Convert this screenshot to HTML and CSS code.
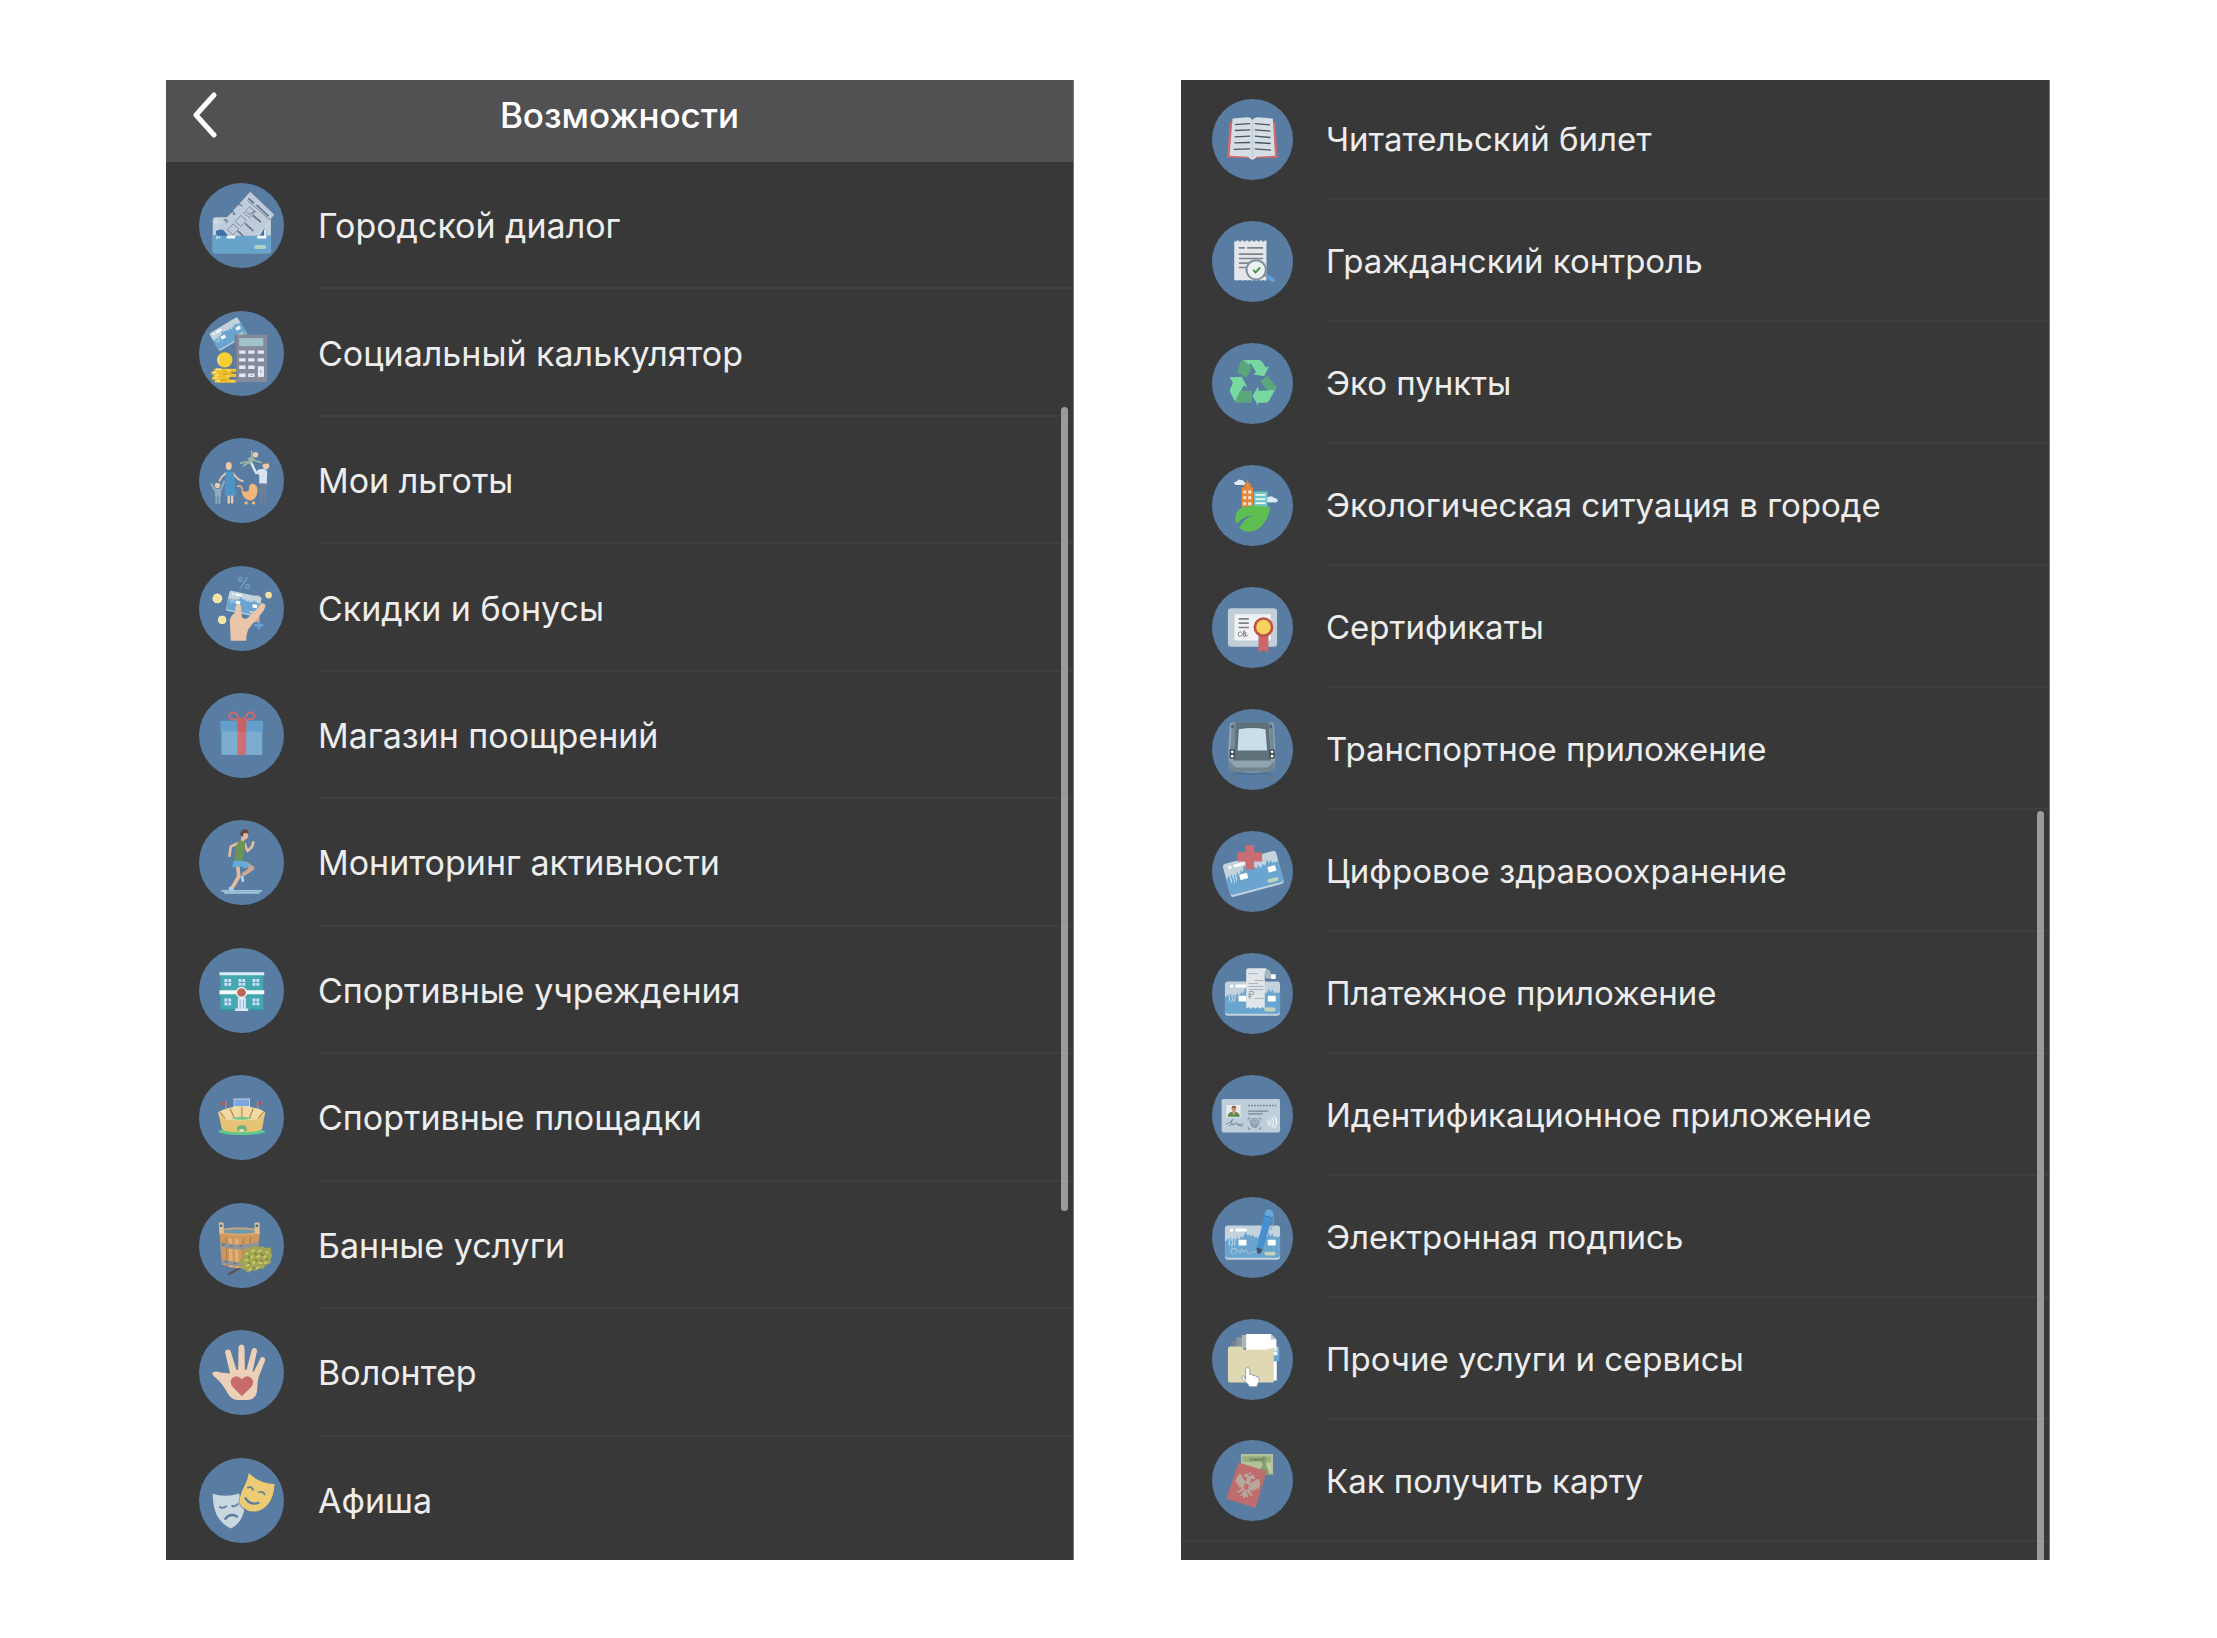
FILE: index.html
```html
<!DOCTYPE html>
<html lang="ru">
<head>
    <meta charset="UTF-8">
    <meta name="viewport" content="width=device-width, initial-scale=1">
    <title>Возможности</title>
    <link rel="stylesheet" href="styles.css">
</head>
<body>
    <svg class="sprite" aria-hidden="true">
        <!-- city card, 166x103 -->
        <symbol id="card" viewBox="0 0 166 103" overflow="visible">
            <rect width="166" height="103" rx="9" fill="#c4d2dc"/>
            <path d="M0 48l5-4 4-6 4 8 5-10 4 8 6-6 4 8 5-14 3 11 6-5 4-8 4 9 5-14 4-8 4 14 6-5 4 7 8-6 3 10 6-5 5 7 4-12 4 9 6 4 4-12 4 8 7-4 5-12 4 14 6-10 5 12 4-4 6 3 8-4v57q0 9-9 9H9q-9 0-9-9z" fill="#69a5cf"/>
            <circle cx="20" cy="14" r="5" fill="#fff"/>
            <rect x="32" y="9" width="34" height="9" rx="3" fill="#fff"/>
            <rect x="41" y="43" width="24" height="17" rx="2" fill="#fff"/>
            <rect x="129" y="43" width="24" height="17" rx="2" fill="#fff"/>
            <path d="M12 44q5 8 0 16M20 41q6 11 0 22M28 44q5 8 0 16" fill="none" stroke="#c9e0ef" stroke-width="3"/>
            <rect x="119" y="79" width="33" height="11" rx="5" fill="#c3d4bd"/>
        </symbol>
    </svg>
    <main class="page">
        <section class="screen screen-main">
            <header class="bar">
                <button class="back" type="button" aria-label="Назад">
                    <svg viewBox="0 0 24 48"><path d="M21 4L3 24l18 20"/></svg>
                </button>
                <h1>Возможности</h1>
            </header>
            <ul class="list">
                <li><a href="#">
                    <svg class="icon" viewBox="27 40 254 254">
                        <rect x="68" y="142" width="174" height="108" rx="10" fill="#c3d3dc"/>
                        <path d="M78 183l12-4 18 2 10 17h90l14-22 6 4v20H78z" fill="#3f72a8"/>
                        <path d="M180 66l72 69-58 64H116L88 168z" fill="#bfcada"/>
                        <g fill="none" stroke="#68758a" stroke-width="2">
                            <path d="M178 111l17 15-17 18-17-15zM152 137l17 15-17 18-17-15zM129 162l17 15-17 18-17-15z"/>
                            <path d="M171 127l7 7 17-11" stroke="#39485f"/>
                        </g>
                        <g stroke="#5c687d" stroke-width="5">
                            <path d="M175 86l17 15M199 106l36 33M188 137l24 20M165 161l24 22M143 184l18 16" stroke-dasharray="6 1"/>
                            <path d="M172 92l68 59" stroke-width="2"/>
                        </g>
                        <g class="mark" fill="#56627a">
                            <text transform="translate(153 114) rotate(-48)">1</text>
                            <text transform="translate(130 138) rotate(-48)">2</text>
                            <text transform="translate(108 161) rotate(-48)">3</text>
                        </g>
                        <path d="M68 196l14-2 4 4h150l6-4v46q0 10-10 10H78q-10 0-10-10z" fill="#67a3cb"/>
                        <path d="M110 198h25v8h-25zM201 198h27v8h-27zM222 178h5v28h-5z" fill="#fff"/>
                        <path d="M81 199v8M88 199v6M78 152v8" stroke="#e6f1f7" stroke-width="4"/>
                        <rect x="192" y="225" width="36" height="12" rx="6" fill="#b3cfc3"/>
                    </svg>
                    <span>Городской диалог</span>
                </a></li>
                <li><a href="#">
                    <svg class="icon" viewBox="27 423 254 254">
                        <g transform="translate(57 491) rotate(-31) scale(.59)"><use href="#card" width="166" height="103"/></g>
                        <rect x="134" y="493" width="97" height="142" rx="4" fill="#858b9c"/>
                        <path d="M134 493h6v142h-6z" fill="#747b8e"/>
                        <rect x="147" y="504" width="72" height="24" fill="#a0c4c8"/>
                        <path d="M147 546h19M174 546h19M202 546h19M147 569h19M174 569h19M202 569h19M147 591h19M174 591h19M147 615h19M174 615h19" stroke="#e3e9f5" stroke-width="10"/>
                        <rect x="203" y="588" width="18" height="32" fill="#e3e9f5"/>
                        <path d="M212 600v8M181 615h6" stroke="#858b9c" stroke-width="3"/>
                        <circle cx="104" cy="569" r="23" fill="#f6ce35"/>
                        <path d="M88 585a23 23 0 0 1 0-32q-2 18 0 32z" fill="#fbe07d"/>
                        <path d="M72 600h66M64 608h60M70 616h68M66 624h52M74 633h64" stroke="#efc22c" stroke-width="9"/>
                        <path d="M78 597h16M68 606h12M76 614h10M72 622h10M80 631h10M112 600h8M108 617h10M122 631h8" stroke="#fdeaa0" stroke-width="4"/>
                        <path d="M100 604h8M98 612h20M90 629h20M124 608h8" stroke="#c99a16" stroke-width="3"/>
                    </svg>
                    <span>Социальный калькулятор</span>
                </a></li>
                <li><a href="#">
                    <svg class="icon" viewBox="27 805 254 254">
                        <g fill="none" stroke-linecap="round" stroke-linejoin="round">
                            <path d="M110 909q-14 8-22 24M130 911q10 18 28 23" stroke="#ecc9ad" stroke-width="5"/>
                            <path d="M116 978v20M126 978v20" stroke="#ecc9ad" stroke-width="7"/>
                            <path d="M64 943l10 17M102 935l-10 24" stroke="#8fadb8" stroke-width="6"/>
                            <path d="M79 975v24M88 975v24" stroke="#8fadb8" stroke-width="6"/>
                            <path d="M186 886l12 24M182 878l6 10" stroke="#d8e3f3" stroke-width="7"/>
                            <path d="M226 908l-2 32" stroke="#d8e3f3" stroke-width="10"/>
                            <path d="M178 866l26 10M184 845l2 18M151 880l22-4M160 888l20-12M208 876l5 2" stroke="#9cb6a2" stroke-width="5"/>
                            <path d="M143 949h8l6 8" stroke="#e9b176" stroke-width="5"/>
                        </g>
                        <ellipse cx="116" cy="889" rx="9" ry="12" fill="#ecc9ad"/>
                        <path d="M106 883q10-12 20 0l-3-6h-14z" fill="#a97f68"/>
                        <path d="M108 905h22l8 72h-35z" fill="#4e94c4"/>
                        <circle cx="82" cy="947" r="8" fill="#ecc9ad"/>
                        <path d="M74 957h18l1 22H75z" fill="#8fadb8"/>
                        <circle cx="196" cy="855" r="8" fill="#ecc9ad"/>
                        <path d="M172 867l14-7 8 9-14 12z" fill="#9cb6a2"/>
                        <circle cx="227" cy="888" r="10" fill="#ecc9ad"/>
                        <path d="M216 884q8-14 20-2l-10-1z" fill="#7b6d6c"/>
                        <path d="M203 900q14-5 26 0v42h-22v-26l-9-8z" fill="#d8e3f3"/>
                        <path d="M208 941h20v58h-6l-3-48-3 48h-7z" fill="#6f7f96"/>
                        <path d="M153 958q16 14 24 2-4-12 8-19 16 2 17 20-2 29-24 31-21-4-25-34z" fill="#f0b67a"/>
                        <circle cx="168" cy="999" r="5" fill="#f0b67a"/>
                        <circle cx="190" cy="999" r="5" fill="#f0b67a"/>
                    </svg>
                    <span>Мои льготы</span>
                </a></li>
                <li><a href="#">
                    <svg class="icon" viewBox="27 47 254 254">
                        <text class="percent" x="161" y="115" text-anchor="middle" fill="#70a5cc">%</text>
                        <g fill="#f5e2a0"><circle cx="82" cy="144" r="14"/><circle cx="96" cy="208" r="12"/><circle cx="235" cy="134" r="10"/></g>
                        <g fill="none" stroke="#f9efc8" stroke-width="3"><circle cx="82" cy="144" r="13" stroke-dasharray="5 3"/><circle cx="96" cy="208" r="11" stroke-dasharray="5 3"/></g>
                        <path d="M206 211v26M193 224h26" stroke="#69a4d0" stroke-width="7"/>
                        <path d="M186 146q4-13 18-11 9 3 7 18l-4 60-30 4z" fill="#dcae90"/>
                        <g transform="translate(119 120) rotate(12) scale(.59)"><use href="#card" width="166" height="103"/></g>
                        <path d="M122 270l-3-62q1-9 16-22l1-16q3-12 12-9 7 4 5 15l2 23q6 10 19 2l15-16q14-8 22-25 8-5 15 3-3 18-16 30l-29 34q-13 14-13 43z" fill="#e9c6aa"/>
                    </svg>
                    <span>Скидки и бонусы</span>
                </a></li>
                <li><a href="#">
                    <svg class="icon" viewBox="27 430 254 254">
                        <g fill="none" stroke="#cc6a6f" stroke-width="6">
                            <path d="M147 511q-29-1-30-11 3-14 16-12 10 6 14 23zM163 511q29-1 30-11-3-14-16-12-10 6-14 23z"/>
                        </g>
                        <path d="M94 543h122v68q0 4-4 4H98q-4 0-4-4z" fill="#7badd0"/>
                        <rect x="91" y="513" width="127" height="32" rx="4" fill="#649fcb"/>
                        <rect x="142" y="513" width="26" height="102" fill="#ca6f73"/>
                        <path d="M142 513q13-20 26 0v32h-26z" fill="#c96064"/>
                    </svg>
                    <span>Магазин поощрений</span>
                </a></li>
                <li><a href="#">
                    <svg class="icon" viewBox="27 812 254 254">
                        <g fill="none" stroke-linecap="round" stroke-linejoin="round">
                            <path d="M142 882l-20 9-4 28M163 882l9 23 14-14 3-12" stroke="#e3bb9f" stroke-width="8"/>
                            <path d="M143 950l3 31-20 34" stroke="#e3bb9f" stroke-width="11"/>
                            <path d="M165 942l22 14-26 18" stroke="#cfa78e" stroke-width="12"/>
                            <path d="M156 982l2 12" stroke="#a8d4f5" stroke-width="8"/>
                            <path d="M120 1016l7 7" stroke="#a8d4f5" stroke-width="9"/>
                        </g>
                        <path d="M154 853q7-10 18-5l2 14q-5 10-12 9v10h-10z" fill="#e3bb9f"/>
                        <path d="M150 854q2-15 16-14 11 2 9 12l-14-1-3 11q-7 0-8-8z" fill="#65453f"/>
                        <path d="M147 868l8 7 10 1-1 20-8 40-24-1 4-24-2-18q9-7 13-25z" fill="#6d9457"/>
                        <path d="M132 933l31 2 17 14-14 9-12-6-28 1z" fill="#68a9dc"/>
                        <path d="M94 1024h121M102 1030h106" stroke="#a2c5dc" stroke-width="5"/>
                    </svg>
                    <span>Мониторинг активности</span>
                </a></li>
                <li><a href="#">
                    <svg class="icon" viewBox="27 54 254 254">
                        <rect x="91" y="132" width="128" height="106" fill="#43a9ae"/>
                        <path d="M88 131h134" stroke="#dcecfa" stroke-width="9"/>
                        <path d="M88 186h134" stroke="#f2f8fb" stroke-width="12"/>
                        <path d="M103 157h20M145 157h20M187 157h20M103 215h20M187 215h20" stroke="#cde2fb" stroke-width="20"/>
                        <path d="M103 157h20M145 157h20M187 157h20M103 215h20M187 215h20M113 147v20M155 147v20M197 147v20M113 205v20M197 205v20" stroke="#5f9bd0" stroke-width="3"/>
                        <path d="M88 240h134" stroke="#39929c" stroke-width="4"/>
                        <path d="M143 203h24v32h7v7h-39v-7h8z" fill="#dce9fb"/>
                        <path d="M150 208v27M160 208v27" stroke="#8fb3df" stroke-width="3"/>
                        <circle cx="154" cy="187" r="17" fill="#eef5f8"/>
                        <circle cx="154" cy="187" r="13" fill="#bd6756"/>
                    </svg>
                    <span>Спортивные учреждения</span>
                </a></li>
                <li><a href="#">
                    <svg class="icon" viewBox="27 436 254 254">
                        <path d="M107 512v24M203 512v24" stroke="#a5b3c4" stroke-width="3"/>
                        <path d="M106 514v16l-18-8zM203 514v16l16-8z" fill="#b55755"/>
                        <path d="M132 536v-28h46v28" fill="#7ea6dc" stroke="#bdd0e6" stroke-width="3"/>
                        <path d="M130 531h50" stroke="#e6eef5" stroke-width="3"/>
                        <ellipse cx="155" cy="605" rx="70" ry="10" fill="#5fc98c"/>
                        <path d="M84 547q30-17 71-17t70 17l-9 48q-3 12-61 12t-60-12z" fill="#e5c274"/>
                        <path d="M84 547q30-17 71-17t70 17l-14 19q-22 6-56 6t-57-6z" fill="#f1daa2"/>
                        <path d="M122 565q33-9 64 0-30 9-64 0z" fill="#74c98c"/>
                        <path d="M89 546l16 20M120 536l12 28M155 532v30M189 536l-11 28M220 546l-16 20" stroke="#bb8a66" stroke-width="4"/>
                        <path d="M141 604v-10q0-8 14-8t14 8v10z" fill="#69b27f"/>
                        <path d="M148 605v-7h13v7z" fill="#e4e5d5"/>
                    </svg>
                    <span>Спортивные площадки</span>
                </a></li>
                <li><a href="#">
                    <svg class="icon" viewBox="27 819 254 254">
                        <path d="M150 1012l-36 20M148 1014l-26 16" stroke="#5d5357" stroke-width="6"/>
                        <path d="M88 905l122 1-16 98q-46 20-99-1z" fill="#cf995e"/>
                        <path d="M107 920l4 88M160 925l-3 88M181 918l-6 85" stroke="#a9794a" stroke-width="3"/>
                        <path d="M121 925l2 86M140 925v88" stroke="#dfb176" stroke-width="10"/>
                        <ellipse cx="148" cy="904" rx="60" ry="12" fill="#d9a76c"/>
                        <ellipse cx="148" cy="904" rx="51" ry="7" fill="#6e9bac"/>
                        <path d="M86 879q7-5 15 0v31H88zM193 879q7-5 15 0v31h-14z" fill="#dfc094"/>
                        <circle cx="93" cy="887" r="4" fill="#41608a"/>
                        <circle cx="200" cy="887" r="4" fill="#41608a"/>
                        <path d="M90 935q56 16 116 0v14q-58 17-114 1zM94 986q30 10 60 9v13q-30 0-58-8z" fill="#8f9499"/>
                        <path d="M96 943h8M120 947h8M148 948h8M104 995h8M130 1000h8" stroke="#666d77" stroke-width="4"/>
                        <path d="M160 965l12-12 10 2 12-9 10 5 14-3 9 6 15-2v14l5 10-7 12 1 12-15 4-7 12-12-2-10 8-11-3-12 9-10-10-11-2 2-14-8-10 9-10z" fill="#a2a650"/>
                        <path d="M165 974l8-6M184 964l9-5M204 964l10-4M227 964l8 5M163 991l10-3M181 984l8-8M199 980l10-3M219 982l9-5M168 1007l10-5M187 1002l7-8M205 997l10 3M176 1020l8-5M198 1014l10-3M222 999l9-3" stroke="#d0cc7c" stroke-width="5"/>
                        <path d="M174 977l5 7M194 968l5 7M212 971l7 6M174 997l7 5M194 988l7 5M210 989l7 4M188 1012l7 3M228 985l5 5" stroke="#77823e" stroke-width="4"/>
                    </svg>
                    <span>Банные услуги</span>
                </a></li>
                <li><a href="#">
                    <svg class="icon" viewBox="27 61 254 254">
                        <path d="M120 191l-15-63q0-9 9-9 6 0 8 7l17 54h5l1-68q2-8 9-8t9 8l1 68h5l15-58q2-8 10-7 8 3 6 11l-13 59h4l20-40q5-6 11-1 4 5 2 10l-19 48q-4 18-4 36-2 32-32 32h-27q-19-2-28-18-12-22-26-38l-18-16q-6-7-1-11 8-5 22 1z" fill="#edd0b8"/>
                        <path d="M155 259l-27-28q-12-15-2-26 14-13 29 3 15-16 29-3 11 12-1 26z" fill="#c76b6c"/>
                    </svg>
                    <span>Волонтер</span>
                </a></li>
                <li><a href="#">
                    <svg class="icon" viewBox="27 444 254 254">
                        <path d="M68 551q39 12 79-1l15 51q-8 37-39 54-28-12-44-42-11-27-11-62z" fill="#c9d7df"/>
                        <g fill="none" stroke="#587ca2" stroke-width="5">
                            <path d="M87 589q11 9 23-2M124 586q11 7 20-6"/>
                            <path d="M104 628q16-22 39-8" stroke-width="7"/>
                        </g>
                        <path d="M175 489q32 31 78 33l-3 25q-9 49-59 60-29-2-42-20-10-19 11-60 11-20 15-38z" fill="#47698e" opacity=".5"/>
                        <path d="M176 489q31 31 77 33-4 66-50 81-34 6-53-21-6-19 14-57 9-18 12-36z" fill="#eccb73"/>
                        <g fill="none" stroke="#587ca2">
                            <path d="M171 534q13-8 19 7M204 547q14-7 20 8" stroke-width="5"/>
                            <path d="M165 562q13 26 42 15" stroke-width="7"/>
                        </g>
                    </svg>
                    <span>Афиша</span>
                </a></li>
            </ul>
            <div class="thumb"></div>
        </section>

        <section class="screen screen-more">
            <ul class="list">
                <li><a href="#">
                    <svg class="icon" viewBox="37 55 244 244">
                        <path d="M91 124h136l8 108-64 1q-12 11-25 0l-64-1z" fill="#cf6a6d"/>
                        <path d="M99 114l44-4q12 0 16 9 4-9 17-9l44 4 7 112-56 3q-6 7-12 9-7-2-13-9l-56-3z" fill="#d5dee5"/>
                        <path d="M159 119v112" stroke="#bccbd5" stroke-width="4"/>
                        <path d="M106 132l46-3M106 150l46-2M105 169l47-2M104 187l48-1M102 207l50-2M166 129l46 4M166 148l47 4M166 167l47 4M166 186l48 3M166 205l49 4" stroke="#4c5660" stroke-width="4"/>
                    </svg>
                    <span>Читательский билет</span>
                </a></li>
                <li><a href="#">
                    <svg class="icon" viewBox="37 421 244 244">
                        <path d="M104 480h97v120h-97z" fill="#e6e6ea"/>
                        <path d="M104 480h97M104 602h97" stroke="#587ca2" stroke-width="5" stroke-dasharray="7 7"/>
                        <path d="M118 502h18M143 502h48M118 521h73M118 534h73M118 548h40M118 561h24" stroke="#7c858d" stroke-width="5"/>
                        <circle cx="170" cy="568" r="29" fill="#eef1f2" stroke="#7f919f" stroke-width="6"/>
                        <path d="M161 568l7 8 14-15" fill="none" stroke="#4a9a57" stroke-width="6"/>
                        <path d="M194 583l10 6" stroke="#7f919f" stroke-width="6"/>
                        <path d="M201 584q16-2 28 20-18 3-27-13z" fill="#609fd7"/>
                    </svg>
                    <span>Гражданский контроль</span>
                </a></li>
                <li><a href="#">
                    <svg class="icon" viewBox="37 788 244 244">
                        <g fill="#77d8a0">
                            <path d="M130 839h47q8 0 12 7l10 16 10-4-15 30-34-6 10-5-16-28-9 10-12-13z"/>
                            <path d="M90 891l37-1 17 33-11-7-12 22-4 30q-8 0-12-7l-13-24q-3-5 0-11l8-18z"/>
                            <path d="M229 917q1 8-3 14l-17 31q-4 6-12 6h-21v9l-17-30 17-29 1 14 28-1z"/>
                        </g>
                        <g fill="#5aa77b">
                            <path d="M131 839q-5 0-8 5l-9 32 27 17 17-33z"/>
                            <path d="M204 886l25 31q0 8-4 13l-23-1-20-26z"/>
                            <path d="M117 967q-5 0-10-5l15-30h35v36z"/>
                        </g>
                    </svg>
                    <span>Эко пункты</span>
                </a></li>
                <li><a href="#">
                    <svg class="icon" viewBox="37 43 244 244">
                        <path d="M110 103q-8-1-6-7 3-5 8-3 4-9 13-5 7-1 9 6 8 3 3 9zM202 155q-8-4-4-11 5-7 11-5 9-5 14 3 12 2 12 9-1 6-8 5z" fill="#dcebf5"/>
                        <path d="M126 170v-60h8v-10l6-2 4-12 4 12 6 3v9h7v60z" fill="#e4883c"/>
                        <path d="M131 124h9M146 124h9M131 142h9M146 142h9M131 160h9M146 160h9" stroke="#f6e4d5" stroke-width="9"/>
                        <path d="M163 123h41v48h-41z" fill="#6fc6c5"/>
                        <path d="M168 133h30M168 146h30M168 158h30" stroke="#e9f6f7" stroke-width="5"/>
                        <path d="M213 169q-6 42-36 66-32 19-58-2 14-30 43-39-32 1-51 27-10-23 4-41 16-17 56-14 28 4 42 3z" fill="#5cbf50"/>
                    </svg>
                    <span>Экологическая ситуация в городе</span>
                </a></li>
                <li><a href="#">
                    <svg class="icon" viewBox="37 410 244 244">
                        <rect x="85" y="474" width="148" height="116" rx="10" fill="#c1cfd8"/>
                        <rect x="105" y="492" width="109" height="79" rx="3" fill="#f1f2f4"/>
                        <path d="M117 506h31M117 519h31M117 532h31" stroke="#7a828a" stroke-width="5"/>
                        <path d="M127 547q-10-6-11 7 2 10 10 3 7-10 9-16-5 16-1 19 7 0 2-12 6-4 1 8 5 5 9-2" fill="none" stroke="#7a828a" stroke-width="3"/>
                        <path d="M177 552h30v57l-15-10-15 10z" fill="#cb6769"/>
                        <circle cx="192" cy="531" r="26" fill="#f7d35f" stroke="#bf5347" stroke-width="8"/>
                    </svg>
                    <span>Сертификаты</span>
                </a></li>
                <li><a href="#">
                    <svg class="icon" viewBox="37 776 244 244">
                        <path d="M115 962l-23 26M201 962l23 26" stroke="#6c7682" stroke-width="9"/>
                        <path d="M109 966h98l10 9H99z" fill="#4f749a"/>
                        <path d="M102 816h112q9 0 10 10l4 75-2 50q-2 8-12 12-52 10-112 0-12-5-14-13l-2-50 4-74q2-10 12-10z" fill="#8ea5b0"/>
                        <path d="M108 816h100l6 115H102z" fill="#5e7179"/>
                        <path d="M97 826l-4 72 11 2 4-84h-5zM220 826l4 72-11 2-4-84h5z" fill="#728a97"/>
                        <path d="M118 837q41-7 80 0l5 64H114z" fill="#c9ddeb"/>
                        <path d="M88 931l20 21h97l22-21-3 26-14 8h-104l-16-8z" fill="#71858f"/>
                        <g fill="#41484f"><rect x="90" y="897" width="16" height="29" rx="4"/><rect x="210" y="897" width="16" height="29" rx="4"/></g>
                        <g fill="#fff"><circle cx="98" cy="905" r="4"/><circle cx="98" cy="918" r="4"/><circle cx="218" cy="905" r="4"/><circle cx="218" cy="918" r="4"/></g>
                        <circle cx="98" cy="829" r="4" fill="#41556a"/><circle cx="214" cy="829" r="4" fill="#41556a"/>
                    </svg>
                    <span>Транспортное приложение</span>
                </a></li>
                <li><a href="#">
                    <svg class="icon" viewBox="37 32 244 244">
                        <g transform="translate(68 133) rotate(-15)"><use href="#card" width="166" height="103"/></g>
                        <path d="M138 75h26v21h24v28h-24v24h-26v-24h-24V96h24z" fill="#ca6d72"/>
                    </svg>
                    <span>Цифровое здравоохранение</span>
                </a></li>
                <li><a href="#">
                    <svg class="icon" viewBox="37 398 244 244">
                        <use href="#card" x="76" y="484" width="166" height="103"/>
                        <path d="M196 444q18 2 19 19v12h-17z" fill="#a7bac2"/>
                        <path d="M215 462h14v14h-14z" fill="#fff"/>
                        <path d="M148 444h52q-4 8-4 18v104l-7-5-7 5-7-5-7 5-7-5-7 5-7-5-7 5V452q0-8 7-8z" fill="#dfe5e8"/>
                        <path d="M147 460h28M165 481h27M147 490h28M147 499h45M147 508h45M165 535h27" stroke="#8c989f" stroke-width="2"/>
                        <text class="rouble" x="145" y="538" fill="#8c989f">₽</text>
                        <rect x="195" y="562" width="33" height="11" rx="5" fill="#c3d4bd"/>
                    </svg>
                    <span>Платежное приложение</span>
                </a></li>
                <li><a href="#">
                    <svg class="icon" viewBox="37 765 244 244">
                        <rect x="66" y="837" width="176" height="101" rx="5" fill="#bfcedb"/>
                        <path d="M80 855h43v38H80z" fill="#e5eaea"/>
                        <path d="M84 891q1-13 14-15h10q12 3 13 15z" fill="#568b4d"/>
                        <path d="M99 874h8v8l-4 4-4-4z" fill="#d4a080"/>
                        <ellipse cx="103" cy="868" rx="6" ry="8" fill="#c98c6c"/>
                        <path d="M96 868q0-10 7-10t7 10l-4-5h-6z" fill="#714c3e"/>
                        <path d="M146 857h84" stroke="#66809a" stroke-width="5" stroke-dasharray="5 4"/>
                        <path d="M146 874h60M146 882h43" stroke="#788592" stroke-width="4"/>
                        <g fill="none" stroke="#5e7185" stroke-width="2">
                            <path d="M79 913q19-5 22-14-9 2-5 13 10 7 13-4 2 8 22 6M88 918q10-8 16-5M112 913q9 9 18 6"/>
                            <path d="M146 902v-7h7M178 895h6v7M146 921v7h7M178 928h6v-7"/>
                            <path d="M152 911q1-15 14-15t13 15M155 919q-2-18 11-18t9 19M159 923q-2-17 7-17t5 17M164 925q-2-14 2-14 3 2 1 14"/>
                        </g>
                        <g fill="none" stroke="#fff" stroke-width="3">
                            <path d="M205 903q4 6 0 11M210 897q8 10 0 22M217 892q11 15 0 31M224 888q16 18 0 38"/>
                        </g>
                    </svg>
                    <span>Идентификационное приложение</span>
                </a></li>
                <li><a href="#">
                    <svg class="icon" viewBox="37 20 244 244">
                        <use href="#card" x="76" y="106" width="166" height="103"/>
                        <path d="M95 177q17-7 16 7-7 14-16 4-6-12 11-12 14 1 16 14 1-18 7-12 1 12 5 9 2-12 7-7 0 9 7 11 22-12 30-1" fill="none" stroke="#b9d5e7" stroke-width="2"/>
                        <path d="M213 76h7l2 22-9 22" fill="none" stroke="#93a4b1" stroke-width="3"/>
                        <path d="M197 66q4-10 14-8 12 3 11 15l-33 107-18-5z" fill="#4690cf"/>
                        <path d="M197 66q4-10 14-8 12 3 11 15l-3 9-25-6z" fill="#68a9dc"/>
                        <path d="M194 76l26 7" stroke="#3779b5" stroke-width="3"/>
                        <path d="M171 172l19 6-9 14-8-3z" fill="#475263"/>
                    </svg>
                    <span>Электронная подпись</span>
                </a></li>
                <li><a href="#">
                    <svg class="icon" viewBox="37 387 244 244">
                        <path d="M95 453h20v40H95z" fill="#748394"/>
                        <path d="M111 442h20v40h-20z" fill="#8b949d"/>
                        <path d="M127 435h20v40h-20z" fill="#afb4b8"/>
                        <path d="M222 495h10v77h-15z" fill="#fff"/>
                        <path d="M206 480h34v34h-34z" fill="#6aa5cd"/>
                        <path d="M221 485h13v11h-13z" fill="#fff"/>
                        <path d="M210 475l27-5v15l-20 4z" fill="#b4cddd"/>
                        <path d="M140 432h74l17 17v32h-91z" fill="#fff"/>
                        <path d="M214 432l17 17h-17z" fill="#c1c5c8"/>
                        <path d="M92 470h32q6 0 8 10h66l32-8-7 10v93q0 3-5 3H90q-5 0-5-5v-97q0-6 7-6z" fill="#ded9b2"/>
                        <path d="M138 569v-29q1-7 7-7 6 1 6 7v14q7-3 9 3 8-3 10 4 8-2 9 5 2 11-5 17l-1 8h-24q-2-7-9-13l-12-12q-4-7 2-8 5 2 8 11z" fill="#fff" stroke="#66819c" stroke-width="2"/>
                    </svg>
                    <span>Прочие услуги и сервисы</span>
                </a></li>
                <li><a href="#">
                    <svg class="icon" viewBox="37 753 244 244">
                        <path d="M124 795h97v62h-97z" fill="#b3c19a"/>
                        <path d="M129 802h86v17h-86z" fill="#9bb07c"/>
                        <path d="M204 824h12v28h-12z" fill="#c1cba7"/>
                        <path d="M178 857q1-19 11-26-6-29 5-29t5 29q9 7 10 26z" fill="#84a06f"/>
                        <text class="doc" x="171" y="815" text-anchor="middle" fill="#4f6e4c">СНИЛС</text>
                        <path d="M117 821l85 26-34 111-88-29z" fill="#bf6c6c"/>
                        <!-- two-headed eagle -->
                        <g transform="translate(143 888) rotate(15)" fill="#b8a79c">
                            <path d="M-8-22q-7 3-10-2 3-10 12-8l6 6 6-6q9-2 12 8-3 5-10 2l-2 8 3 22-9 16-9-16 3-22z"/>
                            <path d="M-8-10q-8-2-12-9-3-7-10-8-9 12-7 31l6-5 1 12 6-6 2 11 6-6 3 8 5-6zM8-10q8-2 12-9 3-7 10-8 9 12 7 31l-6-5-1 12-6-6-2 11-6-6-3 8-5-6z"/>
                            <path d="M-4 18l-16 12-4-3 17-17zM4 18l16 12 4-3L7 10zM-5 20h10l8 18-8-3-5 7-5-7-8 3z"/>
                            <path d="M-5-33l2-6 3 3 3-3 2 6z"/>
                        </g>
                        <path d="M136 884l12 3-3 14q-5 3-9 2-4-4-3-9z" fill="#bf6c6c"/>
                    </svg>
                    <span>Как получить карту</span>
                </a></li>
            </ul>
            <div class="thumb"></div>
        </section>
    </main>
</body>
</html>
```
FILE: styles.css
```css
* {
    box-sizing: border-box;
    margin: 0;
    padding: 0;
}
body {
    background: #fff;
    font-family: Inter, "Noto Sans", sans-serif;
}
.sprite {
    position: absolute;
    width: 0;
    height: 0;
}
.page {
    display: grid;
    grid-template-columns: 908fr 869fr;
    gap: 107px;
    min-height: 100vh;
    padding: 80px 167px 78px 166px;
}
.screen {
    position: relative;
    display: flex;
    flex-direction: column;
    overflow: hidden;
    background: #383838;
    color: #ededed;
    border-right: 1px solid #777;
}
.bar {
    display: grid;
    grid-template-columns: 80px 1fr 80px;
    height: 82px;
    padding-bottom: 12px;
    align-items: center;
    background: #515153;
    color: #fff;
}
.bar h1 {
    font-size: 35px;
    font-weight: 500;
    line-height: 44px;
    text-align: center;
}
.back {
    width: 80px;
    height: 64px;
    padding-left: 27px;
    border: 0;
    background: none;
    text-align: left;
    cursor: pointer;
}
.back svg {
    display: block;
    width: 24px;
    height: 48px;
    fill: none;
    stroke: #fff;
    stroke-width: 5;
    stroke-linecap: round;
    stroke-linejoin: round;
}
.list {
    display: flex;
    flex-direction: column;
    list-style: none;
}
.list li {
    display: flex;
}
.list a {
    display: flex;
    flex: 1;
    align-items: center;
    color: inherit;
    text-decoration: none;
}
.list span {
    display: flex;
    flex: 1;
    align-items: center;
    align-self: stretch;
    padding-top: 2px;
    border-bottom: 2px solid #3f3f3f;
}
.icon {
    flex: none;
    border-radius: 50%;
    background: #587ca2;
}
.thumb {
    position: absolute;
    right: 5px;
    width: 7px;
    border-radius: 4px;
    background: #9b9b9b;
}
.mark {
    font-size: 17px;
    font-weight: 700;
}
.percent {
    font-size: 46px;
}
.rouble {
    font-size: 29px;
}
.doc {
    font-size: 12px;
    font-weight: 600;
}

/* left screen, scrolled to the middle */
.screen-main .list {
    flex: 1;
    margin-bottom: -4px;
    font-size: 34px;
}
.screen-main li {
    flex: 1;
}
.screen-main a {
    gap: 34px;
    padding-left: 33px;
}
.screen-main .icon {
    width: 85px;
    height: 85px;
}
.screen-main .thumb {
    top: 327px;
    height: 804px;
}

/* right screen, scrolled to the end */
.screen-more .list {
    margin-top: -2px;
    font-size: 33px;
}
.screen-more li {
    height: 122px;
}
.screen-more a {
    gap: 33px;
    padding-left: 31px;
}
.screen-more li:last-child {
    border-bottom: 2px solid #3f3f3f;
}
.screen-more li:last-child span {
    border-bottom: 0;
}
.screen-more .icon {
    width: 81px;
    height: 81px;
}
.screen-more .thumb {
    top: 731px;
    bottom: 0;
    border-radius: 4px 4px 0 0;
}
```
